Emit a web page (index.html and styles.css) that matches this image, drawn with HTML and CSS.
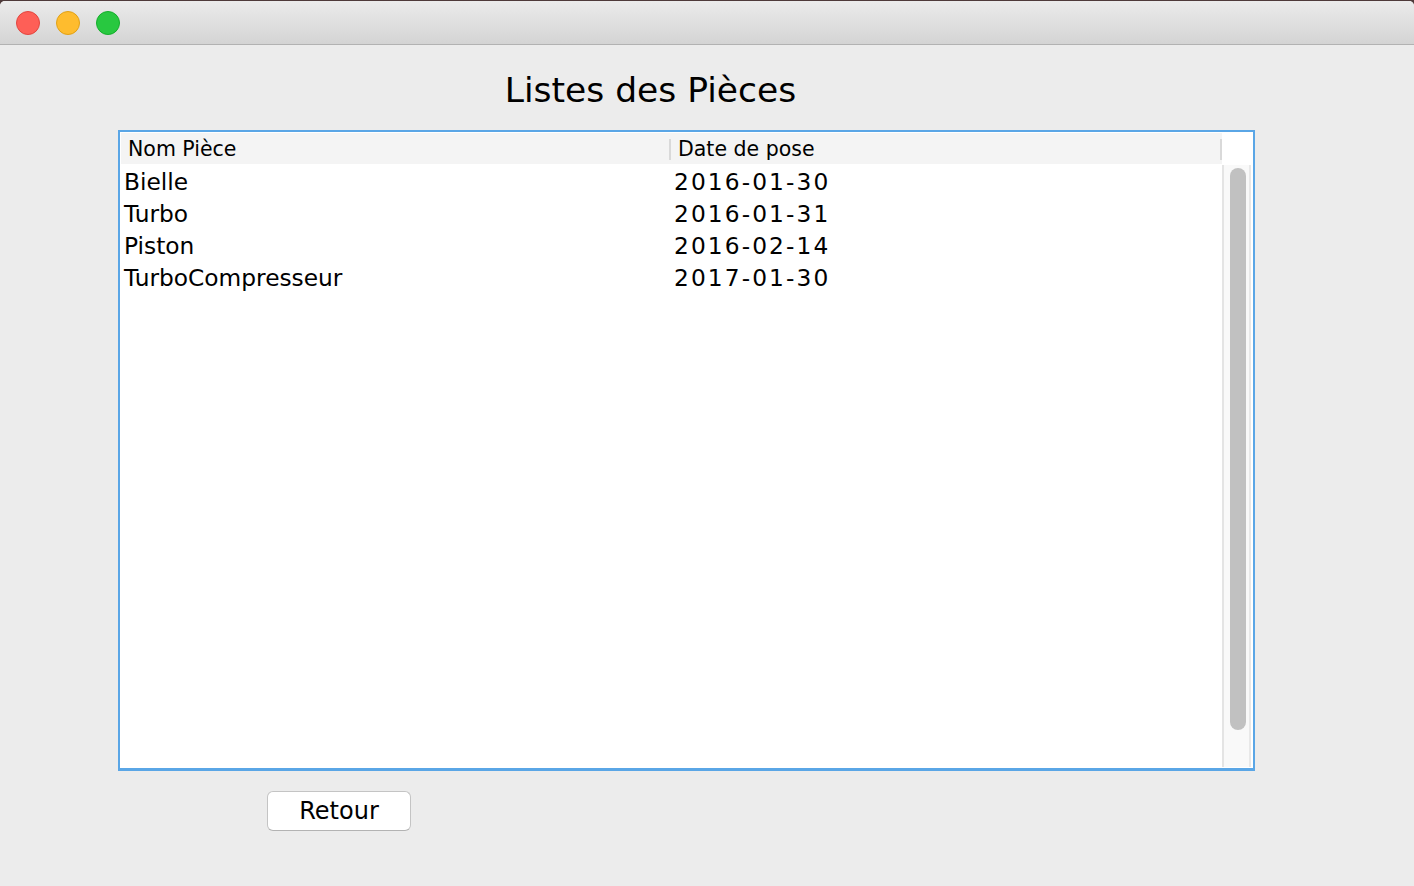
FILE: index.html
```html
<!DOCTYPE html>
<html lang="fr">
<head>
<meta charset="utf-8">
<title>Listes des Pièces</title>
<link rel="stylesheet" href="styles.css">
</head>
<body>
<div class="screen">
  <div class="window">
    <div class="titlebar">
      <span class="light close"></span>
      <span class="light min"></span>
      <span class="light max"></span>
    </div>
    <div class="content">
      <h1 class="title">Listes des Pièces</h1>
      <div class="frame">
        <div class="table">
          <div class="thead">
            <div class="th col1">Nom Pièce</div>
            <div class="th col2">Date de pose</div>
          </div>
          <div class="tbody">
            <div class="tr"><div class="td col1">Bielle</div><div class="td col2 date">2016-01-30</div></div>
            <div class="tr"><div class="td col1">Turbo</div><div class="td col2 date">2016-01-31</div></div>
            <div class="tr"><div class="td col1">Piston</div><div class="td col2 date">2016-02-14</div></div>
            <div class="tr"><div class="td col1">TurboCompresseur</div><div class="td col2 date">2017-01-30</div></div>
          </div>
        </div>
        <div class="scrollcol">
          <div class="scrolltrack"><div class="thumb"></div></div>
        </div>
      </div>
      <div class="actions">
        <button class="btn">Retour</button>
      </div>
    </div>
  </div>
</div>
</body>
</html>
```
FILE: styles.css
```css
* { box-sizing: border-box; }
html, body { margin: 0; padding: 0; }
body {
  width: 1414px;
  height: 886px;
  overflow: hidden;
  font-family: "DejaVu Sans", "Liberation Sans", sans-serif;
  color: #000;
  background: #4e3a3a;
}
.screen { padding-top: 1px; height: 886px; }
.window {
  height: 885px;
  background: #ececec;
  border-radius: 5px 5px 0 0;
  overflow: hidden;
  display: flex;
  flex-direction: column;
}
.titlebar {
  height: 44px;
  flex: none;
  background: linear-gradient(#ebebeb, #d4d4d4);
  border-bottom: 1px solid #b2b2b2;
  display: flex;
  align-items: center;
  padding-left: 16px;
  gap: 16px;
}
.light {
  width: 24px;
  height: 24px;
  border-radius: 50%;
  display: block;
}
.close { background: #fe5f57; border: 1px solid #e2463f; }
.min { background: #febc2e; border: 1px solid #e1a116; }
.max { background: #28c840; border: 1px solid #14ae2b; }
.content {
  display: flex;
  flex-direction: column;
}
.title {
  margin: 0;
  padding-top: 25px;
  height: 85px;
  font-weight: normal;
  font-size: 34.5px;
  line-height: 40px;
  text-align: center;
  padding-right: 113px;
  letter-spacing: 0px;
}
.frame {
  margin-left: 118px;
  width: 1137px;
  height: 641px;
  border-style: solid;
  border-color: #5aa6e6;
  border-width: 2px 2px 3px 2px;
  background: #fff;
  padding: 1px;
  display: flex;
}
.table {
  width: 1101px;
  display: flex;
  flex-direction: column;
}
.thead {
  height: 31px;
  background: #f4f4f4;
  display: flex;
  align-items: center;
  font-size: 20.5px;
  margin-bottom: 1px;
}
.th { height: 31px; line-height: 33px; }
.th.col1 { width: 550px; padding-left: 7px; position: relative; }
.th.col2 { width: 551px; padding-left: 7px; position: relative; }
.th.col1::after, .th.col2::after {
  content: "";
  position: absolute;
  right: 0;
  top: 6px;
  bottom: 4px;
  width: 2px;
  background: #d9d9d9;
}
.tbody { font-size: 23.3px; }
.tr { display: flex; height: 32px; line-height: 34px; }
.td.col1 { width: 550px; padding-left: 3px; }
.td.col2 { width: 551px; padding-left: 3px; }
.date { letter-spacing: 2.1px; }
.scrollcol {
  width: 30px;
  padding-top: 32px;
  display: flex;
  flex-direction: column;
}
.scrolltrack {
  flex: 1;
  background: #f9f9f9;
  border-left: 2px solid #e4e4e4;
  border-right: 2px solid #e8e8e8;
  margin-right: 1px;
  padding: 3px 4px 0 6px;
}
.thumb {
  width: 16px;
  height: 562px;
  border-radius: 8px;
  background: #c1c1c1;
}
.actions {
  padding-top: 20px;
  padding-left: 267px;
}
.btn {
  width: 144px;
  height: 40px;
  background: #fff;
  border: 1px solid #c4c4c4;
  border-bottom-color: #b3b3b3;
  border-radius: 6px;
  font-family: "DejaVu Sans", "Liberation Sans", sans-serif;
  font-size: 24px;
  color: #000;
  padding: 0;
  line-height: 38px;
}
```
